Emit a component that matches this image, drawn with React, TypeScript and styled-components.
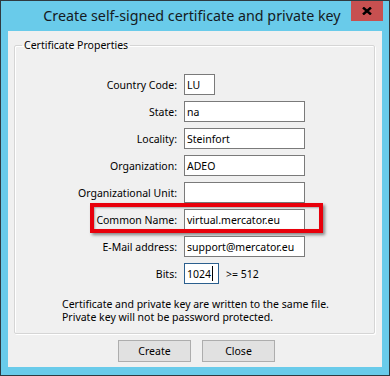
import React from "react";
import styled, { createGlobalStyle } from "styled-components";

const Global = createGlobalStyle`
  html, body { margin: 0; padding: 0; background: #fff; }
  * { box-sizing: border-box; }
`;

const UI_FONT = `"Noto Sans", "Open Sans", "Liberation Sans", sans-serif`;
const FS = "10.5px";

const Window = styled.div`
  width: 390px;
  height: 376px;
  border: 1px solid #2f3a40;
  background: #69cbea;
  display: flex;
  flex-direction: column;
  font-family: ${UI_FONT};
`;

const TitleBar = styled.div`
  height: 30px;
  display: grid;
  grid-template-columns: 1fr auto 1fr;
  padding-right: 6px;
`;

const Title = styled.div`
  grid-column: 2;
  font-size: 14.3px;
  line-height: 30px;
  color: #151a22;
  white-space: nowrap;
`;

const CloseButton = styled.div`
  grid-column: 3;
  justify-self: end;
  width: 32px;
  height: 20px;
  background: #c75050;
  display: flex;
  align-items: center;
  justify-content: center;
`;

const Client = styled.div`
  margin: 0 7px 8px 7px;
  height: 336px;
  background: #f0f0f0;
  display: flex;
  flex-direction: column;
  padding: 0 7px 0 6px;
`;

const Group = styled.fieldset`
  margin: 7px 0 0 0;
  padding: 0;
  height: 296px;
  border: 1px solid #d5d5d5;
  border-radius: 2px;
  box-shadow: 1px 1px 0 #ffffff, inset 1px 1px 0 #ffffff;
  display: flex;
  flex-direction: column;
`;

const Legend = styled.legend`
  margin-left: 7px;
  padding: 0 2px;
  font-size: ${FS};
  line-height: 14px;
  color: #000;
`;

const Rows = styled.div`
  margin-top: 22px;
  display: flex;
  flex-direction: column;
  gap: 6px;
`;

const Row = styled.div`
  position: relative;
  display: grid;
  grid-template-columns: 162px max-content max-content;
  justify-content: start;
  column-gap: 7px;
  align-items: center;
  height: 21px;
`;

const Label = styled.div`
  text-align: right;
  font-size: ${FS};
  color: #000;
  white-space: nowrap;
`;

const Field = styled.div<{ $w: number; $focus?: boolean }>`
  width: ${(p) => p.$w}px;
  height: 21px;
  background: #fff;
  border: 1px solid ${(p) => (p.$focus ? "#2b5f8e" : "#7a7a7a")};
  font-size: ${FS};
  padding-left: 2px;
  color: #000;
  white-space: nowrap;
  overflow: hidden;
  display: flex;
  align-items: center;
`;

const Caret = styled.span`
  display: inline-block;
  width: 1px;
  height: 15px;
  background: #000;
  margin-left: 1px;
`;

const Hint = styled.div`
  font-size: ${FS};
  color: #000;
`;

const Highlight = styled.div`
  position: absolute;
  left: 75px;
  top: -6px;
  width: 233px;
  height: 30px;
  border: 4px solid #e8000b;
  box-shadow: 2px 2px 3px rgba(0, 0, 0, 0.45), inset 1px 1px 2px rgba(0, 0, 0, 0.3);
  pointer-events: none;
`;

const Note = styled.div`
  margin: 14px 0 0 47px;
  font-size: ${FS};
  line-height: 13px;
  color: #000;
`;

const Buttons = styled.div`
  display: flex;
  justify-content: center;
  gap: 11px;
  margin-top: 6px;
  padding-left: 4px;
`;

const Button = styled.div`
  width: 73px;
  height: 22px;
  background: #e1e1e1;
  border: 1px solid #adadad;
  font-size: ${FS};
  color: #000;
  display: flex;
  align-items: center;
  justify-content: center;
`;

type RowDef = { label: string; value: string; w: number };

const rows: RowDef[] = [
  { label: "Country Code:", value: "LU", w: 31 },
  { label: "State:", value: "na", w: 121 },
  { label: "Locality:", value: "Steinfort", w: 121 },
  { label: "Organization:", value: "ADEO", w: 121 },
  { label: "Organizational Unit:", value: "", w: 121 },
  { label: "Common Name:", value: "virtual.mercator.eu", w: 121 },
  { label: "E-Mail address:", value: "support@mercator.eu", w: 121 },
];

export default function App() {
  return (
    <>
      <Global />
      <Window>
        <TitleBar>
          <Title>Create self-signed certificate and private key</Title>
          <CloseButton>
            <svg width="10" height="8" viewBox="0 0 10 8">
              <path d="M1 0.5 L9 7.5 M9 0.5 L1 7.5" stroke="#000" strokeWidth="2.4" />
            </svg>
          </CloseButton>
        </TitleBar>
        <Client>
          <Group>
            <Legend>Certificate Properties</Legend>
            <Rows>
              {rows.map((r) => (
                <Row key={r.label}>
                  <Label>{r.label}</Label>
                  <Field $w={r.w}>{r.value}</Field>
                  {r.label === "Common Name:" && <Highlight />}
                </Row>
              ))}
              <Row>
                <Label>Bits:</Label>
                <Field $w={35} $focus>
                  1024<Caret />
                </Field>
                <Hint>&gt;= 512</Hint>
              </Row>
            </Rows>
            <Note>
              Certificate and private key are written to the same file.
              <br />
              Private key will not be password protected.
            </Note>
          </Group>
          <Buttons>
            <Button>Create</Button>
            <Button>Close</Button>
          </Buttons>
        </Client>
      </Window>
    </>
  );
}
